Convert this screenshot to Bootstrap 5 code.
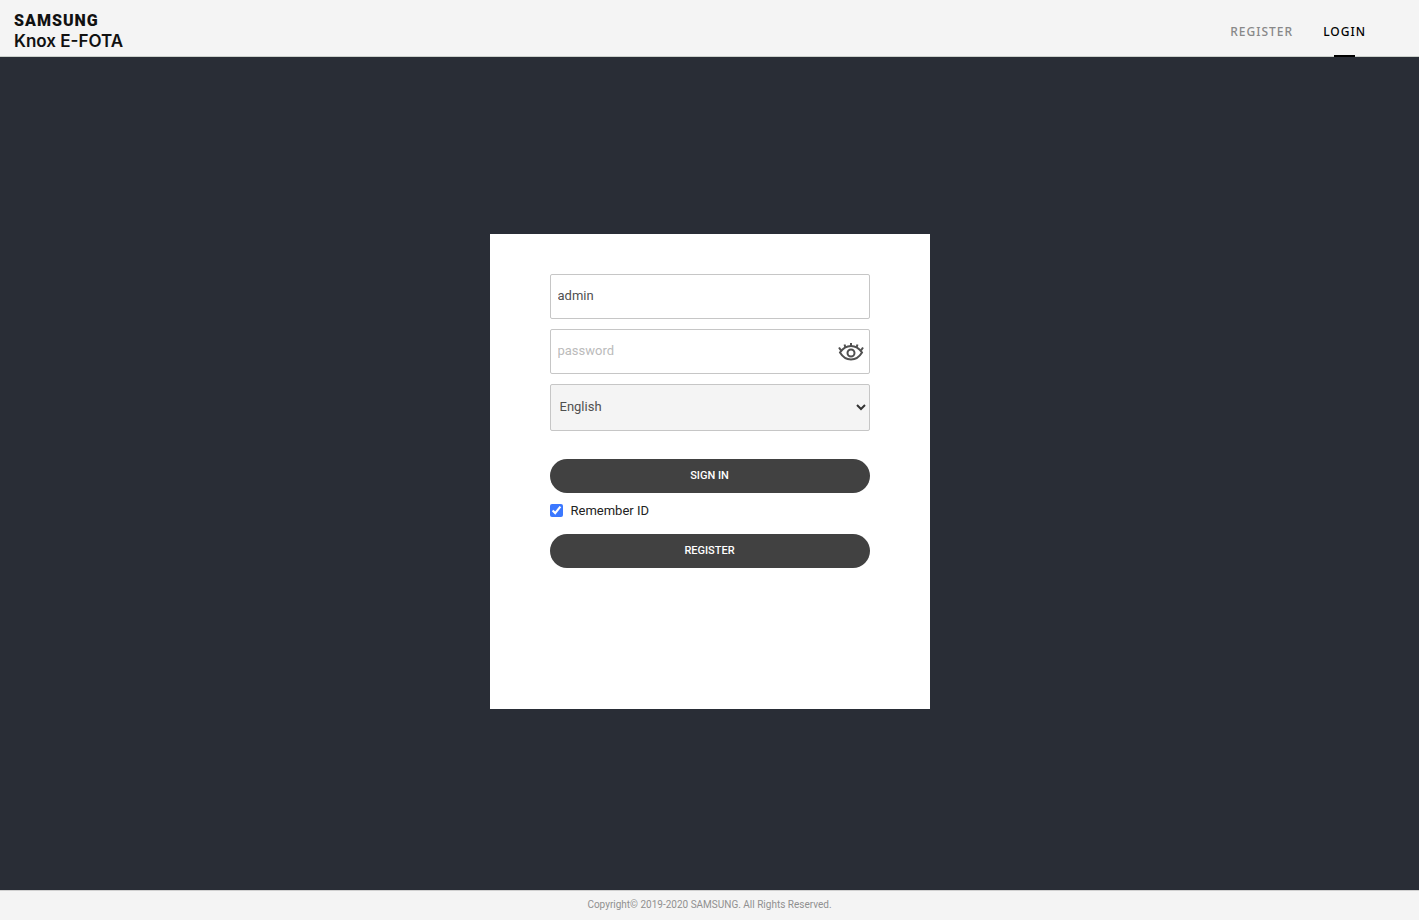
<!DOCTYPE html>
<html lang="en">
<head>
<meta charset="utf-8">
<meta name="viewport" content="width=device-width, initial-scale=1">
<title>Samsung Knox E-FOTA</title>
<link href="https://cdn.jsdelivr.net/npm/bootstrap@5.3.0/dist/css/bootstrap.min.css" rel="stylesheet">
<style>
  body { font-family: Roboto, "Noto Sans", sans-serif; font-size: 13px; background: #292d36; color: #222; }
  .top-bar { background: #f4f4f4; border-bottom: 1px solid #cbd0cb; height: 57px; padding: 0 53px 0 14px; }
  .brand { color: #111; line-height: 20px; padding-top: 6px; }
  .brand-maker { font-size: 16px; font-weight: 900; letter-spacing: 1px; }
  .brand-product { font-family: Inter, sans-serif; font-size: 17px; font-weight: 600; }
  .top-links { gap: 30px; font-family: "Noto Sans", sans-serif; font-size: 12px; letter-spacing: 1px; font-weight: 500; }
  .top-links .nav-link { color: #888; padding: 6px 0 0; height: 57px; display: flex; align-items: center; position: relative; }
  .top-links .nav-link.active { color: #000; }
  .top-links .active::after { content: ""; position: absolute; bottom: 0; left: 25%; width: 50%; height: 2px; background: #000; }
  .login-area { padding-bottom: 4px; }
  .login-box { width: 440px; min-height: 475px; padding: 40px 60px; }
  .fields { gap: 10px; margin-bottom: 28px; }
  .field { height: 45px; border: 1px solid #c6c6c6; border-radius: 2px; padding: 0 7px 2px; color: #505050; background: #fff; }
  .field::placeholder { color: #bbb; }
  .field-lang { height: 47px; background: #f4f4f4; padding: 0 9px 2px; appearance: none; }
  .eye { position: absolute; right: 6px; top: 10px; line-height: 0; }
  .chevron { position: absolute; right: 4px; top: 19px; pointer-events: none; }
  .pill { height: 34px; padding: 0; border-radius: 17px; background: #414141; color: #fff; font-size: 11px; font-weight: 500; }
  .pill:hover { background: #555; color: #fff; }
  .remember { height: 41px; padding-bottom: 6px; gap: 8px; }
  .tick { width: 13px; height: 13px; accent-color: #3b78ff; margin: 0; }
  .bottom-bar { background: #f4f4f4; border-top: 1px solid #d0d0d0; height: 30px; padding-bottom: 2px; font-size: 10px; color: #909090; }
</style>
</head>
<body class="d-flex flex-column min-vh-100">
<header class="top-bar d-flex justify-content-between">
  <a href="#" class="brand d-flex flex-column justify-content-center text-decoration-none">
    <span class="brand-maker">SAMSUNG</span>
    <span class="brand-product">Knox E-FOTA</span>
  </a>
  <nav class="top-links d-flex">
    <a class="nav-link" href="#">REGISTER</a>
    <a class="nav-link active" href="#" aria-current="page">LOGIN</a>
  </nav>
</header>
<main class="login-area flex-grow-1 d-flex align-items-center justify-content-center">
  <form class="login-box bg-white mw-100">
    <div class="fields d-flex flex-column">
      <input class="field w-100" type="text" value="admin" aria-label="ID">
      <div class="position-relative">
        <input class="field w-100 d-block" type="password" placeholder="password" aria-label="Password">
        <button type="button" class="eye border-0 bg-transparent p-0" aria-label="Show password">
          <svg width="26" height="24" viewBox="0 0 26 24" fill="none" stroke="#505050" stroke-width="2">
            <path d="M2 13.500C5 9 9 7 13 7S21 9 24 13.500C21 18.500 17 20.500 13 20.500S5 18.500 2 13.500Z"/>
            <circle cx="13" cy="14" r="3.500"/>
            <path d="M1 8.500l2 3M6.500 5.500l1 3M13 4v3M19.500 5.500l-1 3M25 8.500l-2 3"/>
          </svg>
        </button>
      </div>
      <div class="position-relative">
        <select class="field field-lang w-100 d-block" aria-label="Language"><option>English</option></select>
        <svg class="chevron" width="10" height="8" viewBox="0 0 10 8" fill="none" stroke="#333" stroke-width="2"><path d="M1 2l4 4 4-4"/></svg>
      </div>
    </div>
    <button type="submit" class="btn pill w-100 d-block">SIGN IN</button>
    <div class="remember d-flex align-items-center">
      <input class="tick" type="checkbox" id="remember" checked>
      <label for="remember">Remember ID</label>
    </div>
    <button type="button" class="btn pill w-100 d-block">REGISTER</button>
  </form>
</main>
<footer class="bottom-bar d-flex align-items-center justify-content-center">Copyright© 2019-2020 SAMSUNG. All Rights Reserved.</footer>
<script src="https://cdn.jsdelivr.net/npm/bootstrap@5.3.0/dist/js/bootstrap.bundle.min.js"></script>
</body>
</html>
